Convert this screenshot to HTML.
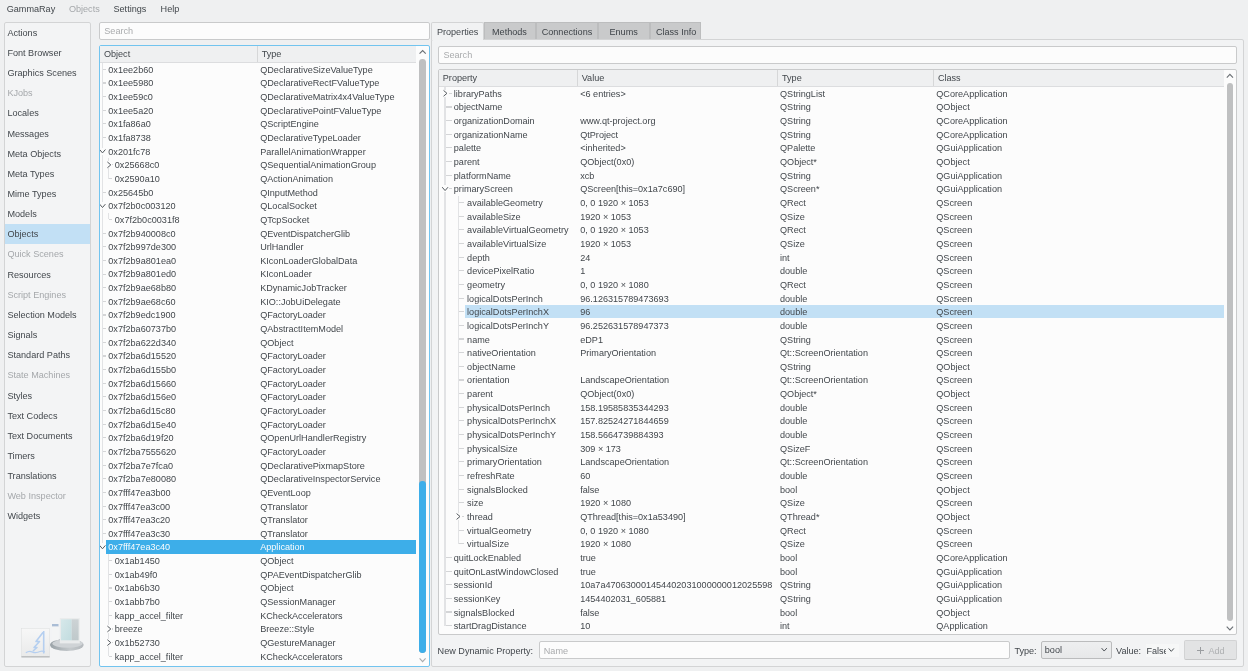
<!DOCTYPE html>
<html><head><meta charset="utf-8"><style>
html,body{margin:0;padding:0;}
body{width:1248px;height:671px;overflow:hidden;background:#eff0f1;position:relative;font-family:"Liberation Sans",sans-serif;font-size:9.1px;}
.t{position:absolute;white-space:nowrap;line-height:1;}
.r{position:absolute;}
svg{position:absolute;left:0;top:0;}
#w{position:absolute;left:0;top:0;width:1248px;height:671px;will-change:transform;}
</style></head><body><div id="w">
<div class="t" style="left:6.70px;top:5.30px;color:#42474c;">GammaRay</div>
<div class="t" style="left:68.90px;top:5.30px;color:#a5a8ab;">Objects</div>
<div class="t" style="left:113.50px;top:5.30px;color:#42474c;">Settings</div>
<div class="t" style="left:160.60px;top:5.30px;color:#42474c;">Help</div>
<div class="r" style="left:4.00px;top:22.00px;width:87.00px;height:645.00px;background:#f3f4f5;border:1px solid #d3d4d5;border-radius:2px;box-sizing:border-box;"></div>
<div class="t" style="left:7.40px;top:28.80px;color:#42474c;">Actions</div>
<div class="t" style="left:7.40px;top:48.95px;color:#42474c;">Font Browser</div>
<div class="t" style="left:7.40px;top:69.10px;color:#42474c;">Graphics Scenes</div>
<div class="t" style="left:7.40px;top:89.25px;color:#a5a8ab;">KJobs</div>
<div class="t" style="left:7.40px;top:109.40px;color:#42474c;">Locales</div>
<div class="t" style="left:7.40px;top:129.55px;color:#42474c;">Messages</div>
<div class="t" style="left:7.40px;top:149.70px;color:#42474c;">Meta Objects</div>
<div class="t" style="left:7.40px;top:169.85px;color:#42474c;">Meta Types</div>
<div class="t" style="left:7.40px;top:190.00px;color:#42474c;">Mime Types</div>
<div class="t" style="left:7.40px;top:210.15px;color:#42474c;">Models</div>
<div class="r" style="left:5.00px;top:224.30px;width:85.00px;height:19.70px;background:#c2e0f5;"></div>
<div class="t" style="left:7.40px;top:230.30px;color:#42474c;">Objects</div>
<div class="t" style="left:7.40px;top:250.45px;color:#a5a8ab;">Quick Scenes</div>
<div class="t" style="left:7.40px;top:270.60px;color:#42474c;">Resources</div>
<div class="t" style="left:7.40px;top:290.75px;color:#a5a8ab;">Script Engines</div>
<div class="t" style="left:7.40px;top:310.90px;color:#42474c;">Selection Models</div>
<div class="t" style="left:7.40px;top:331.05px;color:#42474c;">Signals</div>
<div class="t" style="left:7.40px;top:351.20px;color:#42474c;">Standard Paths</div>
<div class="t" style="left:7.40px;top:371.35px;color:#a5a8ab;">State Machines</div>
<div class="t" style="left:7.40px;top:391.50px;color:#42474c;">Styles</div>
<div class="t" style="left:7.40px;top:411.65px;color:#42474c;">Text Codecs</div>
<div class="t" style="left:7.40px;top:431.80px;color:#42474c;">Text Documents</div>
<div class="t" style="left:7.40px;top:451.95px;color:#42474c;">Timers</div>
<div class="t" style="left:7.40px;top:472.10px;color:#42474c;">Translations</div>
<div class="t" style="left:7.40px;top:492.25px;color:#a5a8ab;">Web Inspector</div>
<div class="t" style="left:7.40px;top:512.40px;color:#42474c;">Widgets</div>
<div class="r" style="left:99.00px;top:22.00px;width:331.00px;height:18.00px;background:#fcfcfc;border:1px solid #c9cacb;border-radius:2px;box-sizing:border-box;"></div>
<div class="t" style="left:104.30px;top:27.00px;color:#a9abad;">Search</div>
<div class="r" style="left:99.00px;top:45.00px;width:331.00px;height:622.00px;background:#fcfcfc;border:1px solid #72c4ef;border-radius:2px;box-sizing:border-box;"></div>
<div class="r" style="left:100.00px;top:46.00px;width:315.80px;height:17.40px;background:#eff0f1;border-bottom:1px solid #dcdddf;box-sizing:border-box;"></div>
<div class="r" style="left:257.20px;top:46.00px;width:0.80px;height:16.40px;background:#d6d7d8;"></div>
<div class="t" style="left:103.90px;top:50.00px;color:#42474c;">Object</div>
<div class="t" style="left:261.70px;top:50.00px;color:#42474c;">Type</div>
<div class="t" style="left:108.30px;top:65.70px;color:#42474c;">0x1ee2b60</div>
<div class="t" style="left:260.20px;top:65.70px;color:#42474c;">QDeclarativeSizeValueType</div>
<div class="t" style="left:108.30px;top:79.35px;color:#42474c;">0x1ee5980</div>
<div class="t" style="left:260.20px;top:79.35px;color:#42474c;">QDeclarativeRectFValueType</div>
<div class="t" style="left:108.30px;top:93.00px;color:#42474c;">0x1ee59c0</div>
<div class="t" style="left:260.20px;top:93.00px;color:#42474c;">QDeclarativeMatrix4x4ValueType</div>
<div class="t" style="left:108.30px;top:106.65px;color:#42474c;">0x1ee5a20</div>
<div class="t" style="left:260.20px;top:106.65px;color:#42474c;">QDeclarativePointFValueType</div>
<div class="t" style="left:108.30px;top:120.30px;color:#42474c;">0x1fa86a0</div>
<div class="t" style="left:260.20px;top:120.30px;color:#42474c;">QScriptEngine</div>
<div class="t" style="left:108.30px;top:133.95px;color:#42474c;">0x1fa8738</div>
<div class="t" style="left:260.20px;top:133.95px;color:#42474c;">QDeclarativeTypeLoader</div>
<div class="t" style="left:108.30px;top:147.60px;color:#42474c;">0x201fc78</div>
<div class="t" style="left:260.20px;top:147.60px;color:#42474c;">ParallelAnimationWrapper</div>
<div class="t" style="left:114.80px;top:161.25px;color:#42474c;">0x25668c0</div>
<div class="t" style="left:260.20px;top:161.25px;color:#42474c;">QSequentialAnimationGroup</div>
<div class="t" style="left:114.80px;top:174.90px;color:#42474c;">0x2590a10</div>
<div class="t" style="left:260.20px;top:174.90px;color:#42474c;">QActionAnimation</div>
<div class="t" style="left:108.30px;top:188.55px;color:#42474c;">0x25645b0</div>
<div class="t" style="left:260.20px;top:188.55px;color:#42474c;">QInputMethod</div>
<div class="t" style="left:108.30px;top:202.20px;color:#42474c;">0x7f2b0c003120</div>
<div class="t" style="left:260.20px;top:202.20px;color:#42474c;">QLocalSocket</div>
<div class="t" style="left:114.80px;top:215.85px;color:#42474c;">0x7f2b0c0031f8</div>
<div class="t" style="left:260.20px;top:215.85px;color:#42474c;">QTcpSocket</div>
<div class="t" style="left:108.30px;top:229.50px;color:#42474c;">0x7f2b940008c0</div>
<div class="t" style="left:260.20px;top:229.50px;color:#42474c;">QEventDispatcherGlib</div>
<div class="t" style="left:108.30px;top:243.15px;color:#42474c;">0x7f2b997de300</div>
<div class="t" style="left:260.20px;top:243.15px;color:#42474c;">UrlHandler</div>
<div class="t" style="left:108.30px;top:256.80px;color:#42474c;">0x7f2b9a801ea0</div>
<div class="t" style="left:260.20px;top:256.80px;color:#42474c;">KIconLoaderGlobalData</div>
<div class="t" style="left:108.30px;top:270.45px;color:#42474c;">0x7f2b9a801ed0</div>
<div class="t" style="left:260.20px;top:270.45px;color:#42474c;">KIconLoader</div>
<div class="t" style="left:108.30px;top:284.10px;color:#42474c;">0x7f2b9ae68b80</div>
<div class="t" style="left:260.20px;top:284.10px;color:#42474c;">KDynamicJobTracker</div>
<div class="t" style="left:108.30px;top:297.75px;color:#42474c;">0x7f2b9ae68c60</div>
<div class="t" style="left:260.20px;top:297.75px;color:#42474c;">KIO::JobUiDelegate</div>
<div class="t" style="left:108.30px;top:311.40px;color:#42474c;">0x7f2b9edc1900</div>
<div class="t" style="left:260.20px;top:311.40px;color:#42474c;">QFactoryLoader</div>
<div class="t" style="left:108.30px;top:325.05px;color:#42474c;">0x7f2ba60737b0</div>
<div class="t" style="left:260.20px;top:325.05px;color:#42474c;">QAbstractItemModel</div>
<div class="t" style="left:108.30px;top:338.70px;color:#42474c;">0x7f2ba622d340</div>
<div class="t" style="left:260.20px;top:338.70px;color:#42474c;">QObject</div>
<div class="t" style="left:108.30px;top:352.35px;color:#42474c;">0x7f2ba6d15520</div>
<div class="t" style="left:260.20px;top:352.35px;color:#42474c;">QFactoryLoader</div>
<div class="t" style="left:108.30px;top:366.00px;color:#42474c;">0x7f2ba6d155b0</div>
<div class="t" style="left:260.20px;top:366.00px;color:#42474c;">QFactoryLoader</div>
<div class="t" style="left:108.30px;top:379.65px;color:#42474c;">0x7f2ba6d15660</div>
<div class="t" style="left:260.20px;top:379.65px;color:#42474c;">QFactoryLoader</div>
<div class="t" style="left:108.30px;top:393.30px;color:#42474c;">0x7f2ba6d156e0</div>
<div class="t" style="left:260.20px;top:393.30px;color:#42474c;">QFactoryLoader</div>
<div class="t" style="left:108.30px;top:406.95px;color:#42474c;">0x7f2ba6d15c80</div>
<div class="t" style="left:260.20px;top:406.95px;color:#42474c;">QFactoryLoader</div>
<div class="t" style="left:108.30px;top:420.60px;color:#42474c;">0x7f2ba6d15e40</div>
<div class="t" style="left:260.20px;top:420.60px;color:#42474c;">QFactoryLoader</div>
<div class="t" style="left:108.30px;top:434.25px;color:#42474c;">0x7f2ba6d19f20</div>
<div class="t" style="left:260.20px;top:434.25px;color:#42474c;">QOpenUrlHandlerRegistry</div>
<div class="t" style="left:108.30px;top:447.90px;color:#42474c;">0x7f2ba7555620</div>
<div class="t" style="left:260.20px;top:447.90px;color:#42474c;">QFactoryLoader</div>
<div class="t" style="left:108.30px;top:461.55px;color:#42474c;">0x7f2ba7e7fca0</div>
<div class="t" style="left:260.20px;top:461.55px;color:#42474c;">QDeclarativePixmapStore</div>
<div class="t" style="left:108.30px;top:475.20px;color:#42474c;">0x7f2ba7e80080</div>
<div class="t" style="left:260.20px;top:475.20px;color:#42474c;">QDeclarativeInspectorService</div>
<div class="t" style="left:108.30px;top:488.85px;color:#42474c;">0x7fff47ea3b00</div>
<div class="t" style="left:260.20px;top:488.85px;color:#42474c;">QEventLoop</div>
<div class="t" style="left:108.30px;top:502.50px;color:#42474c;">0x7fff47ea3c00</div>
<div class="t" style="left:260.20px;top:502.50px;color:#42474c;">QTranslator</div>
<div class="t" style="left:108.30px;top:516.15px;color:#42474c;">0x7fff47ea3c20</div>
<div class="t" style="left:260.20px;top:516.15px;color:#42474c;">QTranslator</div>
<div class="t" style="left:108.30px;top:529.80px;color:#42474c;">0x7fff47ea3c30</div>
<div class="t" style="left:260.20px;top:529.80px;color:#42474c;">QTranslator</div>
<div class="r" style="left:106.00px;top:540.25px;width:310.00px;height:13.65px;background:#3daee9;"></div>
<div class="t" style="left:108.30px;top:543.45px;color:#fcfcfc;">0x7fff47ea3c40</div>
<div class="t" style="left:260.20px;top:543.45px;color:#fcfcfc;">Application</div>
<div class="t" style="left:114.80px;top:557.10px;color:#42474c;">0x1ab1450</div>
<div class="t" style="left:260.20px;top:557.10px;color:#42474c;">QObject</div>
<div class="t" style="left:114.80px;top:570.75px;color:#42474c;">0x1ab49f0</div>
<div class="t" style="left:260.20px;top:570.75px;color:#42474c;">QPAEventDispatcherGlib</div>
<div class="t" style="left:114.80px;top:584.40px;color:#42474c;">0x1ab6b30</div>
<div class="t" style="left:260.20px;top:584.40px;color:#42474c;">QObject</div>
<div class="t" style="left:114.80px;top:598.05px;color:#42474c;">0x1abb7b0</div>
<div class="t" style="left:260.20px;top:598.05px;color:#42474c;">QSessionManager</div>
<div class="t" style="left:114.80px;top:611.70px;color:#42474c;">kapp_accel_filter</div>
<div class="t" style="left:260.20px;top:611.70px;color:#42474c;">KCheckAccelerators</div>
<div class="t" style="left:114.80px;top:625.35px;color:#42474c;">breeze</div>
<div class="t" style="left:260.20px;top:625.35px;color:#42474c;">Breeze::Style</div>
<div class="t" style="left:114.80px;top:639.00px;color:#42474c;">0x1b52730</div>
<div class="t" style="left:260.20px;top:639.00px;color:#42474c;">QGestureManager</div>
<div class="t" style="left:114.80px;top:652.65px;color:#42474c;">kapp_accel_filter</div>
<div class="t" style="left:260.20px;top:652.65px;color:#42474c;">KCheckAccelerators</div>
<div class="r" style="left:103.10px;top:68.78px;width:2.90px;height:1.10px;background:#d4d5d7;"></div>
<div class="r" style="left:103.10px;top:82.43px;width:2.90px;height:1.10px;background:#d4d5d7;"></div>
<div class="r" style="left:103.10px;top:96.08px;width:2.90px;height:1.10px;background:#d4d5d7;"></div>
<div class="r" style="left:103.10px;top:109.73px;width:2.90px;height:1.10px;background:#d4d5d7;"></div>
<div class="r" style="left:103.10px;top:123.38px;width:2.90px;height:1.10px;background:#d4d5d7;"></div>
<div class="r" style="left:103.10px;top:137.02px;width:2.90px;height:1.10px;background:#d4d5d7;"></div>
<div class="r" style="left:112.00px;top:164.32px;width:0.80px;height:1.10px;background:#d4d5d7;"></div>
<div class="r" style="left:109.20px;top:177.97px;width:3.10px;height:1.10px;background:#d4d5d7;"></div>
<div class="r" style="left:103.10px;top:191.62px;width:2.90px;height:1.10px;background:#d4d5d7;"></div>
<div class="r" style="left:109.20px;top:218.92px;width:3.10px;height:1.10px;background:#d4d5d7;"></div>
<div class="r" style="left:103.10px;top:232.57px;width:2.90px;height:1.10px;background:#d4d5d7;"></div>
<div class="r" style="left:103.10px;top:246.22px;width:2.90px;height:1.10px;background:#d4d5d7;"></div>
<div class="r" style="left:103.10px;top:259.88px;width:2.90px;height:1.10px;background:#d4d5d7;"></div>
<div class="r" style="left:103.10px;top:273.52px;width:2.90px;height:1.10px;background:#d4d5d7;"></div>
<div class="r" style="left:103.10px;top:287.17px;width:2.90px;height:1.10px;background:#d4d5d7;"></div>
<div class="r" style="left:103.10px;top:300.82px;width:2.90px;height:1.10px;background:#d4d5d7;"></div>
<div class="r" style="left:103.10px;top:314.48px;width:2.90px;height:1.10px;background:#d4d5d7;"></div>
<div class="r" style="left:103.10px;top:328.12px;width:2.90px;height:1.10px;background:#d4d5d7;"></div>
<div class="r" style="left:103.10px;top:341.77px;width:2.90px;height:1.10px;background:#d4d5d7;"></div>
<div class="r" style="left:103.10px;top:355.43px;width:2.90px;height:1.10px;background:#d4d5d7;"></div>
<div class="r" style="left:103.10px;top:369.07px;width:2.90px;height:1.10px;background:#d4d5d7;"></div>
<div class="r" style="left:103.10px;top:382.72px;width:2.90px;height:1.10px;background:#d4d5d7;"></div>
<div class="r" style="left:103.10px;top:396.38px;width:2.90px;height:1.10px;background:#d4d5d7;"></div>
<div class="r" style="left:103.10px;top:410.02px;width:2.90px;height:1.10px;background:#d4d5d7;"></div>
<div class="r" style="left:103.10px;top:423.68px;width:2.90px;height:1.10px;background:#d4d5d7;"></div>
<div class="r" style="left:103.10px;top:437.32px;width:2.90px;height:1.10px;background:#d4d5d7;"></div>
<div class="r" style="left:103.10px;top:450.97px;width:2.90px;height:1.10px;background:#d4d5d7;"></div>
<div class="r" style="left:103.10px;top:464.62px;width:2.90px;height:1.10px;background:#d4d5d7;"></div>
<div class="r" style="left:103.10px;top:478.27px;width:2.90px;height:1.10px;background:#d4d5d7;"></div>
<div class="r" style="left:103.10px;top:491.93px;width:2.90px;height:1.10px;background:#d4d5d7;"></div>
<div class="r" style="left:103.10px;top:505.57px;width:2.90px;height:1.10px;background:#d4d5d7;"></div>
<div class="r" style="left:103.10px;top:519.23px;width:2.90px;height:1.10px;background:#d4d5d7;"></div>
<div class="r" style="left:103.10px;top:532.88px;width:2.90px;height:1.10px;background:#d4d5d7;"></div>
<div class="r" style="left:109.20px;top:560.18px;width:3.10px;height:1.10px;background:#d4d5d7;"></div>
<div class="r" style="left:109.20px;top:573.83px;width:3.10px;height:1.10px;background:#d4d5d7;"></div>
<div class="r" style="left:109.20px;top:587.48px;width:3.10px;height:1.10px;background:#d4d5d7;"></div>
<div class="r" style="left:109.20px;top:601.13px;width:3.10px;height:1.10px;background:#d4d5d7;"></div>
<div class="r" style="left:109.20px;top:614.78px;width:3.10px;height:1.10px;background:#d4d5d7;"></div>
<div class="r" style="left:112.00px;top:628.43px;width:0.80px;height:1.10px;background:#d4d5d7;"></div>
<div class="r" style="left:112.00px;top:642.08px;width:0.80px;height:1.10px;background:#d4d5d7;"></div>
<div class="r" style="left:109.20px;top:655.73px;width:3.10px;height:1.10px;background:#d4d5d7;"></div>
<div class="r" style="left:101.90px;top:62.50px;width:1.20px;height:85.12px;background:#e2e3e5;"></div>
<div class="r" style="left:101.90px;top:154.82px;width:1.20px;height:47.40px;background:#e2e3e5;"></div>
<div class="r" style="left:101.90px;top:209.42px;width:1.20px;height:334.05px;background:#e2e3e5;"></div>
<div class="r" style="left:108.00px;top:158.05px;width:1.20px;height:3.22px;background:#e2e3e5;"></div>
<div class="r" style="left:108.00px;top:168.47px;width:1.20px;height:10.05px;background:#e2e3e5;"></div>
<div class="r" style="left:108.00px;top:212.65px;width:1.20px;height:6.82px;background:#e2e3e5;"></div>
<div class="r" style="left:108.00px;top:553.90px;width:1.20px;height:71.47px;background:#e2e3e5;"></div>
<div class="r" style="left:108.00px;top:632.58px;width:1.20px;height:6.45px;background:#e2e3e5;"></div>
<div class="r" style="left:108.00px;top:646.23px;width:1.20px;height:10.05px;background:#e2e3e5;"></div>
<div class="r" style="left:419.20px;top:58.50px;width:6.80px;height:594.50px;background:#bfc0c1;border-radius:3.4px;"></div>
<div class="r" style="left:419.20px;top:481.00px;width:6.80px;height:172.00px;background:#3daee9;border-radius:3.4px;"></div>
<div class="r" style="left:431.00px;top:39.00px;width:813.00px;height:628.00px;background:#f2f3f4;border:1px solid #d3d4d5;border-radius:2px;box-sizing:border-box;"></div>
<div class="r" style="left:483.70px;top:22.00px;width:52.70px;height:17.00px;background:#c9cacb;border:1px solid #bcbdbe;border-bottom:none;box-sizing:border-box;"></div>
<div class="t" style="left:492.00px;top:27.60px;color:#3f4449;">Methods</div>
<div class="r" style="left:536.40px;top:22.00px;width:62.00px;height:17.00px;background:#c9cacb;border:1px solid #bcbdbe;border-bottom:none;box-sizing:border-box;"></div>
<div class="t" style="left:541.70px;top:27.60px;color:#3f4449;">Connections</div>
<div class="r" style="left:598.40px;top:22.00px;width:51.90px;height:17.00px;background:#c9cacb;border:1px solid #bcbdbe;border-bottom:none;box-sizing:border-box;"></div>
<div class="t" style="left:609.50px;top:27.60px;color:#3f4449;">Enums</div>
<div class="r" style="left:650.30px;top:22.00px;width:51.20px;height:17.00px;background:#c9cacb;border:1px solid #bcbdbe;border-bottom:none;box-sizing:border-box;"></div>
<div class="t" style="left:655.90px;top:27.60px;color:#3f4449;">Class Info</div>
<div class="r" style="left:431.00px;top:22.00px;width:53.00px;height:18.00px;background:#f1f2f3;border:1px solid #d3d4d5;border-bottom:none;border-radius:2px 2px 0 0;box-sizing:border-box;"></div>
<div class="t" style="left:436.90px;top:27.60px;color:#42474c;">Properties</div>
<div class="r" style="left:438.00px;top:46.00px;width:799.00px;height:18.00px;background:#fcfcfc;border:1px solid #c9cacb;border-radius:2px;box-sizing:border-box;"></div>
<div class="t" style="left:443.40px;top:51.00px;color:#a9abad;">Search</div>
<div class="r" style="left:438.00px;top:69.00px;width:799.00px;height:566.00px;background:#fcfcfc;border:1px solid #c9cacb;border-radius:2px;box-sizing:border-box;"></div>
<div class="r" style="left:439.00px;top:70.00px;width:784.50px;height:17.00px;background:#eff0f1;border-bottom:1px solid #dcdddf;box-sizing:border-box;"></div>
<div class="r" style="left:576.90px;top:70.20px;width:0.80px;height:16.20px;background:#d6d7d8;"></div>
<div class="r" style="left:776.90px;top:70.20px;width:0.80px;height:16.20px;background:#d6d7d8;"></div>
<div class="r" style="left:933.30px;top:70.20px;width:0.80px;height:16.20px;background:#d6d7d8;"></div>
<div class="t" style="left:442.80px;top:74.00px;color:#42474c;">Property</div>
<div class="t" style="left:581.70px;top:74.00px;color:#42474c;">Value</div>
<div class="t" style="left:782.00px;top:74.00px;color:#42474c;">Type</div>
<div class="t" style="left:937.90px;top:74.00px;color:#42474c;">Class</div>
<div class="t" style="left:453.80px;top:89.80px;color:#42474c;">libraryPaths</div>
<div class="t" style="left:580.2px;top:89.80px;width:195px;overflow:hidden;color:#42474c">&lt;6 entries&gt;</div>
<div class="t" style="left:780.00px;top:89.80px;color:#42474c;">QStringList</div>
<div class="t" style="left:936.30px;top:89.80px;color:#42474c;">QCoreApplication</div>
<div class="r" style="left:448.50px;top:92.78px;width:3.30px;height:1.10px;background:#d4d5d7;"></div>
<div class="t" style="left:453.80px;top:103.45px;color:#42474c;">objectName</div>
<div class="t" style="left:580.2px;top:103.45px;width:195px;overflow:hidden;color:#42474c"></div>
<div class="t" style="left:780.00px;top:103.45px;color:#42474c;">QString</div>
<div class="t" style="left:936.30px;top:103.45px;color:#42474c;">QObject</div>
<div class="r" style="left:445.60px;top:106.43px;width:6.20px;height:1.10px;background:#d4d5d7;"></div>
<div class="t" style="left:453.80px;top:117.10px;color:#42474c;">organizationDomain</div>
<div class="t" style="left:580.2px;top:117.10px;width:195px;overflow:hidden;color:#42474c">www.qt-project.org</div>
<div class="t" style="left:780.00px;top:117.10px;color:#42474c;">QString</div>
<div class="t" style="left:936.30px;top:117.10px;color:#42474c;">QCoreApplication</div>
<div class="r" style="left:445.60px;top:120.08px;width:6.20px;height:1.10px;background:#d4d5d7;"></div>
<div class="t" style="left:453.80px;top:130.75px;color:#42474c;">organizationName</div>
<div class="t" style="left:580.2px;top:130.75px;width:195px;overflow:hidden;color:#42474c">QtProject</div>
<div class="t" style="left:780.00px;top:130.75px;color:#42474c;">QString</div>
<div class="t" style="left:936.30px;top:130.75px;color:#42474c;">QCoreApplication</div>
<div class="r" style="left:445.60px;top:133.72px;width:6.20px;height:1.10px;background:#d4d5d7;"></div>
<div class="t" style="left:453.80px;top:144.40px;color:#42474c;">palette</div>
<div class="t" style="left:580.2px;top:144.40px;width:195px;overflow:hidden;color:#42474c">&lt;inherited&gt;</div>
<div class="t" style="left:780.00px;top:144.40px;color:#42474c;">QPalette</div>
<div class="t" style="left:936.30px;top:144.40px;color:#42474c;">QGuiApplication</div>
<div class="r" style="left:445.60px;top:147.37px;width:6.20px;height:1.10px;background:#d4d5d7;"></div>
<div class="t" style="left:453.80px;top:158.05px;color:#42474c;">parent</div>
<div class="t" style="left:580.2px;top:158.05px;width:195px;overflow:hidden;color:#42474c">QObject(0x0)</div>
<div class="t" style="left:780.00px;top:158.05px;color:#42474c;">QObject*</div>
<div class="t" style="left:936.30px;top:158.05px;color:#42474c;">QObject</div>
<div class="r" style="left:445.60px;top:161.02px;width:6.20px;height:1.10px;background:#d4d5d7;"></div>
<div class="t" style="left:453.80px;top:171.70px;color:#42474c;">platformName</div>
<div class="t" style="left:580.2px;top:171.70px;width:195px;overflow:hidden;color:#42474c">xcb</div>
<div class="t" style="left:780.00px;top:171.70px;color:#42474c;">QString</div>
<div class="t" style="left:936.30px;top:171.70px;color:#42474c;">QGuiApplication</div>
<div class="r" style="left:445.60px;top:174.67px;width:6.20px;height:1.10px;background:#d4d5d7;"></div>
<div class="t" style="left:453.80px;top:185.35px;color:#42474c;">primaryScreen</div>
<div class="t" style="left:580.2px;top:185.35px;width:195px;overflow:hidden;color:#42474c">QScreen[this=0x1a7c690]</div>
<div class="t" style="left:780.00px;top:185.35px;color:#42474c;">QScreen*</div>
<div class="t" style="left:936.30px;top:185.35px;color:#42474c;">QGuiApplication</div>
<div class="r" style="left:448.50px;top:188.32px;width:3.30px;height:1.10px;background:#d4d5d7;"></div>
<div class="t" style="left:467.10px;top:199.00px;color:#42474c;">availableGeometry</div>
<div class="t" style="left:580.2px;top:199.00px;width:195px;overflow:hidden;color:#42474c">0, 0 1920 × 1053</div>
<div class="t" style="left:780.00px;top:199.00px;color:#42474c;">QRect</div>
<div class="t" style="left:936.30px;top:199.00px;color:#42474c;">QScreen</div>
<div class="r" style="left:458.80px;top:201.97px;width:5.60px;height:1.10px;background:#d4d5d7;"></div>
<div class="t" style="left:467.10px;top:212.65px;color:#42474c;">availableSize</div>
<div class="t" style="left:580.2px;top:212.65px;width:195px;overflow:hidden;color:#42474c">1920 × 1053</div>
<div class="t" style="left:780.00px;top:212.65px;color:#42474c;">QSize</div>
<div class="t" style="left:936.30px;top:212.65px;color:#42474c;">QScreen</div>
<div class="r" style="left:458.80px;top:215.62px;width:5.60px;height:1.10px;background:#d4d5d7;"></div>
<div class="t" style="left:467.10px;top:226.30px;color:#42474c;">availableVirtualGeometry</div>
<div class="t" style="left:580.2px;top:226.30px;width:195px;overflow:hidden;color:#42474c">0, 0 1920 × 1053</div>
<div class="t" style="left:780.00px;top:226.30px;color:#42474c;">QRect</div>
<div class="t" style="left:936.30px;top:226.30px;color:#42474c;">QScreen</div>
<div class="r" style="left:458.80px;top:229.27px;width:5.60px;height:1.10px;background:#d4d5d7;"></div>
<div class="t" style="left:467.10px;top:239.95px;color:#42474c;">availableVirtualSize</div>
<div class="t" style="left:580.2px;top:239.95px;width:195px;overflow:hidden;color:#42474c">1920 × 1053</div>
<div class="t" style="left:780.00px;top:239.95px;color:#42474c;">QSize</div>
<div class="t" style="left:936.30px;top:239.95px;color:#42474c;">QScreen</div>
<div class="r" style="left:458.80px;top:242.92px;width:5.60px;height:1.10px;background:#d4d5d7;"></div>
<div class="t" style="left:467.10px;top:253.60px;color:#42474c;">depth</div>
<div class="t" style="left:580.2px;top:253.60px;width:195px;overflow:hidden;color:#42474c">24</div>
<div class="t" style="left:780.00px;top:253.60px;color:#42474c;">int</div>
<div class="t" style="left:936.30px;top:253.60px;color:#42474c;">QScreen</div>
<div class="r" style="left:458.80px;top:256.57px;width:5.60px;height:1.10px;background:#d4d5d7;"></div>
<div class="t" style="left:467.10px;top:267.25px;color:#42474c;">devicePixelRatio</div>
<div class="t" style="left:580.2px;top:267.25px;width:195px;overflow:hidden;color:#42474c">1</div>
<div class="t" style="left:780.00px;top:267.25px;color:#42474c;">double</div>
<div class="t" style="left:936.30px;top:267.25px;color:#42474c;">QScreen</div>
<div class="r" style="left:458.80px;top:270.23px;width:5.60px;height:1.10px;background:#d4d5d7;"></div>
<div class="t" style="left:467.10px;top:280.90px;color:#42474c;">geometry</div>
<div class="t" style="left:580.2px;top:280.90px;width:195px;overflow:hidden;color:#42474c">0, 0 1920 × 1080</div>
<div class="t" style="left:780.00px;top:280.90px;color:#42474c;">QRect</div>
<div class="t" style="left:936.30px;top:280.90px;color:#42474c;">QScreen</div>
<div class="r" style="left:458.80px;top:283.88px;width:5.60px;height:1.10px;background:#d4d5d7;"></div>
<div class="t" style="left:467.10px;top:294.55px;color:#42474c;">logicalDotsPerInch</div>
<div class="t" style="left:580.2px;top:294.55px;width:195px;overflow:hidden;color:#42474c">96.126315789473693</div>
<div class="t" style="left:780.00px;top:294.55px;color:#42474c;">double</div>
<div class="t" style="left:936.30px;top:294.55px;color:#42474c;">QScreen</div>
<div class="r" style="left:458.80px;top:297.52px;width:5.60px;height:1.10px;background:#d4d5d7;"></div>
<div class="r" style="left:465.00px;top:305.30px;width:758.50px;height:13.05px;background:#c2e0f5;"></div>
<div class="t" style="left:467.10px;top:308.20px;color:#42474c;">logicalDotsPerInchX</div>
<div class="t" style="left:580.2px;top:308.20px;width:195px;overflow:hidden;color:#42474c">96</div>
<div class="t" style="left:780.00px;top:308.20px;color:#42474c;">double</div>
<div class="t" style="left:936.30px;top:308.20px;color:#42474c;">QScreen</div>
<div class="r" style="left:458.80px;top:311.17px;width:5.60px;height:1.10px;background:#d4d5d7;"></div>
<div class="t" style="left:467.10px;top:321.85px;color:#42474c;">logicalDotsPerInchY</div>
<div class="t" style="left:580.2px;top:321.85px;width:195px;overflow:hidden;color:#42474c">96.252631578947373</div>
<div class="t" style="left:780.00px;top:321.85px;color:#42474c;">double</div>
<div class="t" style="left:936.30px;top:321.85px;color:#42474c;">QScreen</div>
<div class="r" style="left:458.80px;top:324.82px;width:5.60px;height:1.10px;background:#d4d5d7;"></div>
<div class="t" style="left:467.10px;top:335.50px;color:#42474c;">name</div>
<div class="t" style="left:580.2px;top:335.50px;width:195px;overflow:hidden;color:#42474c">eDP1</div>
<div class="t" style="left:780.00px;top:335.50px;color:#42474c;">QString</div>
<div class="t" style="left:936.30px;top:335.50px;color:#42474c;">QScreen</div>
<div class="r" style="left:458.80px;top:338.48px;width:5.60px;height:1.10px;background:#d4d5d7;"></div>
<div class="t" style="left:467.10px;top:349.15px;color:#42474c;">nativeOrientation</div>
<div class="t" style="left:580.2px;top:349.15px;width:195px;overflow:hidden;color:#42474c">PrimaryOrientation</div>
<div class="t" style="left:780.00px;top:349.15px;color:#42474c;">Qt::ScreenOrientation</div>
<div class="t" style="left:936.30px;top:349.15px;color:#42474c;">QScreen</div>
<div class="r" style="left:458.80px;top:352.12px;width:5.60px;height:1.10px;background:#d4d5d7;"></div>
<div class="t" style="left:467.10px;top:362.80px;color:#42474c;">objectName</div>
<div class="t" style="left:580.2px;top:362.80px;width:195px;overflow:hidden;color:#42474c"></div>
<div class="t" style="left:780.00px;top:362.80px;color:#42474c;">QString</div>
<div class="t" style="left:936.30px;top:362.80px;color:#42474c;">QObject</div>
<div class="r" style="left:458.80px;top:365.77px;width:5.60px;height:1.10px;background:#d4d5d7;"></div>
<div class="t" style="left:467.10px;top:376.45px;color:#42474c;">orientation</div>
<div class="t" style="left:580.2px;top:376.45px;width:195px;overflow:hidden;color:#42474c">LandscapeOrientation</div>
<div class="t" style="left:780.00px;top:376.45px;color:#42474c;">Qt::ScreenOrientation</div>
<div class="t" style="left:936.30px;top:376.45px;color:#42474c;">QScreen</div>
<div class="r" style="left:458.80px;top:379.43px;width:5.60px;height:1.10px;background:#d4d5d7;"></div>
<div class="t" style="left:467.10px;top:390.10px;color:#42474c;">parent</div>
<div class="t" style="left:580.2px;top:390.10px;width:195px;overflow:hidden;color:#42474c">QObject(0x0)</div>
<div class="t" style="left:780.00px;top:390.10px;color:#42474c;">QObject*</div>
<div class="t" style="left:936.30px;top:390.10px;color:#42474c;">QObject</div>
<div class="r" style="left:458.80px;top:393.07px;width:5.60px;height:1.10px;background:#d4d5d7;"></div>
<div class="t" style="left:467.10px;top:403.75px;color:#42474c;">physicalDotsPerInch</div>
<div class="t" style="left:580.2px;top:403.75px;width:195px;overflow:hidden;color:#42474c">158.19585835344293</div>
<div class="t" style="left:780.00px;top:403.75px;color:#42474c;">double</div>
<div class="t" style="left:936.30px;top:403.75px;color:#42474c;">QScreen</div>
<div class="r" style="left:458.80px;top:406.72px;width:5.60px;height:1.10px;background:#d4d5d7;"></div>
<div class="t" style="left:467.10px;top:417.40px;color:#42474c;">physicalDotsPerInchX</div>
<div class="t" style="left:580.2px;top:417.40px;width:195px;overflow:hidden;color:#42474c">157.82524271844659</div>
<div class="t" style="left:780.00px;top:417.40px;color:#42474c;">double</div>
<div class="t" style="left:936.30px;top:417.40px;color:#42474c;">QScreen</div>
<div class="r" style="left:458.80px;top:420.38px;width:5.60px;height:1.10px;background:#d4d5d7;"></div>
<div class="t" style="left:467.10px;top:431.05px;color:#42474c;">physicalDotsPerInchY</div>
<div class="t" style="left:580.2px;top:431.05px;width:195px;overflow:hidden;color:#42474c">158.5664739884393</div>
<div class="t" style="left:780.00px;top:431.05px;color:#42474c;">double</div>
<div class="t" style="left:936.30px;top:431.05px;color:#42474c;">QScreen</div>
<div class="r" style="left:458.80px;top:434.02px;width:5.60px;height:1.10px;background:#d4d5d7;"></div>
<div class="t" style="left:467.10px;top:444.70px;color:#42474c;">physicalSize</div>
<div class="t" style="left:580.2px;top:444.70px;width:195px;overflow:hidden;color:#42474c">309 × 173</div>
<div class="t" style="left:780.00px;top:444.70px;color:#42474c;">QSizeF</div>
<div class="t" style="left:936.30px;top:444.70px;color:#42474c;">QScreen</div>
<div class="r" style="left:458.80px;top:447.68px;width:5.60px;height:1.10px;background:#d4d5d7;"></div>
<div class="t" style="left:467.10px;top:458.35px;color:#42474c;">primaryOrientation</div>
<div class="t" style="left:580.2px;top:458.35px;width:195px;overflow:hidden;color:#42474c">LandscapeOrientation</div>
<div class="t" style="left:780.00px;top:458.35px;color:#42474c;">Qt::ScreenOrientation</div>
<div class="t" style="left:936.30px;top:458.35px;color:#42474c;">QScreen</div>
<div class="r" style="left:458.80px;top:461.32px;width:5.60px;height:1.10px;background:#d4d5d7;"></div>
<div class="t" style="left:467.10px;top:472.00px;color:#42474c;">refreshRate</div>
<div class="t" style="left:580.2px;top:472.00px;width:195px;overflow:hidden;color:#42474c">60</div>
<div class="t" style="left:780.00px;top:472.00px;color:#42474c;">double</div>
<div class="t" style="left:936.30px;top:472.00px;color:#42474c;">QScreen</div>
<div class="r" style="left:458.80px;top:474.97px;width:5.60px;height:1.10px;background:#d4d5d7;"></div>
<div class="t" style="left:467.10px;top:485.65px;color:#42474c;">signalsBlocked</div>
<div class="t" style="left:580.2px;top:485.65px;width:195px;overflow:hidden;color:#42474c">false</div>
<div class="t" style="left:780.00px;top:485.65px;color:#42474c;">bool</div>
<div class="t" style="left:936.30px;top:485.65px;color:#42474c;">QObject</div>
<div class="r" style="left:458.80px;top:488.62px;width:5.60px;height:1.10px;background:#d4d5d7;"></div>
<div class="t" style="left:467.10px;top:499.30px;color:#42474c;">size</div>
<div class="t" style="left:580.2px;top:499.30px;width:195px;overflow:hidden;color:#42474c">1920 × 1080</div>
<div class="t" style="left:780.00px;top:499.30px;color:#42474c;">QSize</div>
<div class="t" style="left:936.30px;top:499.30px;color:#42474c;">QScreen</div>
<div class="r" style="left:458.80px;top:502.27px;width:5.60px;height:1.10px;background:#d4d5d7;"></div>
<div class="t" style="left:467.10px;top:512.95px;color:#42474c;">thread</div>
<div class="t" style="left:580.2px;top:512.95px;width:195px;overflow:hidden;color:#42474c">QThread[this=0x1a53490]</div>
<div class="t" style="left:780.00px;top:512.95px;color:#42474c;">QThread*</div>
<div class="t" style="left:936.30px;top:512.95px;color:#42474c;">QObject</div>
<div class="r" style="left:462.00px;top:515.93px;width:2.40px;height:1.10px;background:#d4d5d7;"></div>
<div class="t" style="left:467.10px;top:526.60px;color:#42474c;">virtualGeometry</div>
<div class="t" style="left:580.2px;top:526.60px;width:195px;overflow:hidden;color:#42474c">0, 0 1920 × 1080</div>
<div class="t" style="left:780.00px;top:526.60px;color:#42474c;">QRect</div>
<div class="t" style="left:936.30px;top:526.60px;color:#42474c;">QScreen</div>
<div class="r" style="left:458.80px;top:529.58px;width:5.60px;height:1.10px;background:#d4d5d7;"></div>
<div class="t" style="left:467.10px;top:540.25px;color:#42474c;">virtualSize</div>
<div class="t" style="left:580.2px;top:540.25px;width:195px;overflow:hidden;color:#42474c">1920 × 1080</div>
<div class="t" style="left:780.00px;top:540.25px;color:#42474c;">QSize</div>
<div class="t" style="left:936.30px;top:540.25px;color:#42474c;">QScreen</div>
<div class="r" style="left:458.80px;top:543.23px;width:5.60px;height:1.10px;background:#d4d5d7;"></div>
<div class="t" style="left:453.80px;top:553.90px;color:#42474c;">quitLockEnabled</div>
<div class="t" style="left:580.2px;top:553.90px;width:195px;overflow:hidden;color:#42474c">true</div>
<div class="t" style="left:780.00px;top:553.90px;color:#42474c;">bool</div>
<div class="t" style="left:936.30px;top:553.90px;color:#42474c;">QCoreApplication</div>
<div class="r" style="left:445.60px;top:556.88px;width:6.20px;height:1.10px;background:#d4d5d7;"></div>
<div class="t" style="left:453.80px;top:567.55px;color:#42474c;">quitOnLastWindowClosed</div>
<div class="t" style="left:580.2px;top:567.55px;width:195px;overflow:hidden;color:#42474c">true</div>
<div class="t" style="left:780.00px;top:567.55px;color:#42474c;">bool</div>
<div class="t" style="left:936.30px;top:567.55px;color:#42474c;">QGuiApplication</div>
<div class="r" style="left:445.60px;top:570.53px;width:6.20px;height:1.10px;background:#d4d5d7;"></div>
<div class="t" style="left:453.80px;top:581.20px;color:#42474c;">sessionId</div>
<div class="t" style="left:580.2px;top:581.20px;width:195px;overflow:hidden;color:#42474c">10a7a470630001454402031000000012025598</div>
<div class="t" style="left:780.00px;top:581.20px;color:#42474c;">QString</div>
<div class="t" style="left:936.30px;top:581.20px;color:#42474c;">QGuiApplication</div>
<div class="r" style="left:445.60px;top:584.18px;width:6.20px;height:1.10px;background:#d4d5d7;"></div>
<div class="t" style="left:453.80px;top:594.85px;color:#42474c;">sessionKey</div>
<div class="t" style="left:580.2px;top:594.85px;width:195px;overflow:hidden;color:#42474c">1454402031_605881</div>
<div class="t" style="left:780.00px;top:594.85px;color:#42474c;">QString</div>
<div class="t" style="left:936.30px;top:594.85px;color:#42474c;">QGuiApplication</div>
<div class="r" style="left:445.60px;top:597.83px;width:6.20px;height:1.10px;background:#d4d5d7;"></div>
<div class="t" style="left:453.80px;top:608.50px;color:#42474c;">signalsBlocked</div>
<div class="t" style="left:580.2px;top:608.50px;width:195px;overflow:hidden;color:#42474c">false</div>
<div class="t" style="left:780.00px;top:608.50px;color:#42474c;">bool</div>
<div class="t" style="left:936.30px;top:608.50px;color:#42474c;">QObject</div>
<div class="r" style="left:445.60px;top:611.48px;width:6.20px;height:1.10px;background:#d4d5d7;"></div>
<div class="t" style="left:453.80px;top:622.15px;color:#42474c;">startDragDistance</div>
<div class="t" style="left:580.2px;top:622.15px;width:195px;overflow:hidden;color:#42474c">10</div>
<div class="t" style="left:780.00px;top:622.15px;color:#42474c;">int</div>
<div class="t" style="left:936.30px;top:622.15px;color:#42474c;">QApplication</div>
<div class="r" style="left:445.60px;top:625.13px;width:6.20px;height:1.10px;background:#d4d5d7;"></div>
<div class="r" style="left:444.40px;top:86.50px;width:1.20px;height:3.23px;background:#e2e3e5;"></div>
<div class="r" style="left:444.40px;top:96.92px;width:1.20px;height:88.35px;background:#e2e3e5;"></div>
<div class="r" style="left:444.40px;top:192.47px;width:1.20px;height:433.20px;background:#e2e3e5;"></div>
<div class="r" style="left:457.60px;top:195.70px;width:1.20px;height:317.18px;background:#e2e3e5;"></div>
<div class="r" style="left:457.60px;top:520.08px;width:1.20px;height:23.70px;background:#e2e3e5;"></div>
<div class="r" style="left:1226.60px;top:83.00px;width:6.40px;height:538.30px;background:#bfc0c1;border-radius:3.2px;"></div>
<div class="t" style="left:437.60px;top:647.00px;color:#42474c;">New Dynamic Property:</div>
<div class="r" style="left:539.00px;top:641.00px;width:471.00px;height:18.00px;background:#fcfcfc;border:1px solid #c9cacb;border-radius:2px;box-sizing:border-box;"></div>
<div class="t" style="left:543.80px;top:646.60px;color:#a9abad;">Name</div>
<div class="t" style="left:1014.40px;top:647.00px;color:#42474c;">Type:</div>
<div class="r" style="left:1041.00px;top:641.00px;width:71.00px;height:18.00px;background:linear-gradient(#eeeff0,#e7e8e9);border:1px solid #bbbcbd;border-radius:2px;box-sizing:border-box;"></div>
<div class="t" style="left:1044.80px;top:646.20px;color:#42474c;">bool</div>
<div class="t" style="left:1116.00px;top:647.00px;color:#42474c;">Value:</div>
<div class="r" style="left:1146.00px;top:643.50px;width:33.00px;height:13.00px;background:#f6f7f7;"></div>
<div class="t" style="left:1146.4px;top:647.00px;width:19.6px;overflow:hidden;color:#42474c">False</div>
<div class="r" style="left:1184.00px;top:640.00px;width:53.00px;height:20.00px;background:#e2e3e4;border:1px solid #d2d3d4;border-bottom-color:#c6c7c8;border-radius:2px;box-sizing:border-box;"></div>
<div class="r" style="left:1196.60px;top:649.90px;width:7.20px;height:1.00px;background:#9a9da0;"></div>
<div class="r" style="left:1199.70px;top:647.00px;width:1.00px;height:6.80px;background:#9a9da0;"></div>
<div class="t" style="left:1208.40px;top:646.50px;color:#aeb0b2;">Add</div>
<svg width="1248" height="671" viewBox="0 0 1248 671"><defs><clipPath id="objclip"><rect x="100" y="46" width="316" height="620"/></clipPath></defs>
<g clip-path="url(#objclip)">
<polyline points="99.60,149.53 102.50,152.92 105.40,149.53" fill="none" stroke="#555a5f" stroke-width="1.0"/>
<polyline points="107.40,161.97 110.80,164.88 107.40,167.78" fill="none" stroke="#555a5f" stroke-width="1.0"/>
<polyline points="99.60,204.12 102.50,207.52 105.40,204.12" fill="none" stroke="#555a5f" stroke-width="1.0"/>
<polyline points="99.60,545.38 102.50,548.78 105.40,545.38" fill="none" stroke="#555a5f" stroke-width="1.0"/>
<polyline points="107.40,626.08 110.80,628.98 107.40,631.88" fill="none" stroke="#555a5f" stroke-width="1.0"/>
<polyline points="107.40,639.73 110.80,642.63 107.40,645.53" fill="none" stroke="#555a5f" stroke-width="1.0"/>
</g>
<polyline points="419.55,53.70 422.65,50.50 425.75,53.70" fill="none" stroke="#6b7075" stroke-width="1.1"/>
<polyline points="419.60,658.40 422.60,661.60 425.60,658.40" fill="none" stroke="#a8abae" stroke-width="1.1"/>
<polyline points="443.55,90.42 446.95,93.33 443.55,96.23" fill="none" stroke="#555a5f" stroke-width="1.0"/>
<polyline points="442.20,187.18 445.10,190.57 448.00,187.18" fill="none" stroke="#555a5f" stroke-width="1.0"/>
<polyline points="456.60,513.58 460.00,516.48 456.60,519.38" fill="none" stroke="#555a5f" stroke-width="1.0"/>
<polyline points="1226.80,77.65 1229.90,74.35 1233.00,77.65" fill="none" stroke="#6b7075" stroke-width="1.1"/>
<polyline points="1226.70,626.60 1229.90,630.00 1233.10,626.60" fill="none" stroke="#6b7075" stroke-width="1.1"/>
<polyline points="1101.60,648.15 1104.20,651.05 1106.80,648.15" fill="none" stroke="#4d5257" stroke-width="1.0"/>
<polyline points="1168.70,648.45 1171.30,651.35 1173.90,648.45" fill="none" stroke="#4d5257" stroke-width="1.0"/>

<defs>
<linearGradient id="gbox" x1="0" y1="0" x2="0" y2="1"><stop offset="0" stop-color="#f7f7f7"/><stop offset="1" stop-color="#e9eaea"/></linearGradient>
<linearGradient id="gbase" x1="0" y1="0" x2="1" y2="0"><stop offset="0" stop-color="#9aa2a7"/><stop offset="0.6" stop-color="#c4c9cc"/><stop offset="1" stop-color="#b3b8bc"/></linearGradient>
<linearGradient id="gscr" x1="0" y1="0" x2="1" y2="1"><stop offset="0" stop-color="#d6e8ea"/><stop offset="1" stop-color="#c2dcdf"/></linearGradient>
<linearGradient id="gscr2" x1="0" y1="0" x2="0" y2="1"><stop offset="0" stop-color="#cdd3d5"/><stop offset="1" stop-color="#bfc9cb"/></linearGradient>
</defs>
<g>
<ellipse cx="66.8" cy="644.8" rx="16.8" ry="6.2" fill="url(#gbase)"/>
<ellipse cx="67.5" cy="643.6" rx="15.2" ry="4.2" fill="#cfd3d6"/>
<rect x="59.8" y="618.1" width="20" height="25.3" fill="#e9ebec"/>
<rect x="61" y="619.3" width="10.7" height="21" fill="url(#gscr)"/>
<rect x="71.7" y="619.3" width="6.9" height="21" fill="url(#gscr2)"/>
<rect x="52" y="624" width="6.5" height="2.6" fill="#aabdd5"/>
<rect x="52" y="626.6" width="6.5" height="13.7" fill="#f4f5f5"/>
<rect x="21.4" y="628.4" width="28.3" height="28.3" fill="url(#gbox)" stroke="#dcdddd" stroke-width="0.5"/>
<rect x="21.4" y="656.2" width="28.3" height="1.3" fill="#b5b7b9"/>
<path d="M43.7,631 L43.7,653.5 M43.7,631.5 L36,641.5 L39.5,641.5 L34,647.5 L37,647.5 L33,651" fill="none" stroke="#b5cff0" stroke-width="1.6" stroke-linejoin="round"/>
<path d="M25.8,652.8 Q29,650.5 32,651.8 Q36,653.5 40,651.5 Q42.5,650.5 44.8,652" fill="none" stroke="#b5cff0" stroke-width="1.3"/>
</g>
</svg>
</div></body></html>
